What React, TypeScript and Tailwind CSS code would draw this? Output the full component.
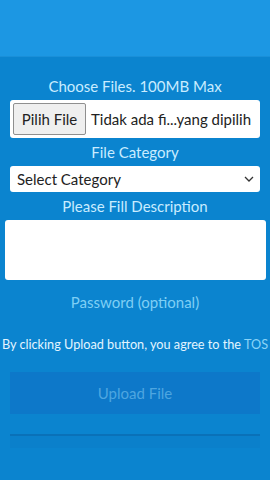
import React from "react";

export default function App() {
  const font = { fontFamily: '"Lato", "Open Sans", sans-serif' };
  return (
    <div className="w-[270px] h-[480px] bg-[#0b84cf] overflow-hidden" style={font}>
      <div className="h-[57px] bg-[#1c97e3] border-b border-[#1a8fd8]" />
      <div className="flex flex-col items-center">
        <div className="mt-[19px] h-[20px] leading-[20px] text-[15px] text-[#c9ecff]">Choose Files. 100MB Max</div>
        <div className="mt-[4px] w-[250px] h-[38px] bg-white rounded-[3px] flex items-center px-[3px]">
          <div className="h-[32px] w-[73px] bg-[#efefef] border border-[#8f8f8f] rounded-[2px] flex items-center justify-center text-[15px] text-[#222]">Pilih File</div>
          <div className="ml-[5px] text-[15px] text-[#222] whitespace-nowrap">Tidak ada fi...yang dipilih</div>
        </div>
        <div className="mt-[4px] h-[20px] leading-[20px] text-[15px] text-[#c9ecff]">File Category</div>
        <div className="mt-[4px] w-[250px] h-[26px] bg-white rounded-[3px] flex items-center justify-between pl-[7px] pr-[6px]">
          <span className="text-[15px] text-[#222]">Select Category</span>
          <svg width="10" height="6" viewBox="0 0 10 6"><path d="M1 1l4 4 4-4" fill="none" stroke="#333" strokeWidth="1.3" /></svg>
        </div>
        <div className="mt-[4px] h-[20px] leading-[20px] text-[15px] text-[#c9ecff]">Please Fill Description</div>
        <div className="mt-[4px] w-[261px] h-[60px] bg-white rounded-[3px]" />
        <div className="mt-[12px] h-[20px] leading-[20px] text-[15px] text-[#7fcff5]">Password (optional)</div>
        <div className="mt-[23px] h-[18px] leading-[18px] text-[12.7px] text-[#e3f5ff] whitespace-nowrap">
          By clicking Upload button, you agree to the <span className="text-[#8ad4f8]">TOS</span>
        </div>
        <div className="mt-[19px] w-[250px] h-[42px] bg-[#0d78c9] flex items-center justify-center text-[15px] text-[#4ea6e0]">Upload File</div>
        <div className="mt-[20px] w-[250px] h-[14px] border-t-2 border-[#0a71b8] bg-[#0b80cb]" />
      </div>
    </div>
  );
}
